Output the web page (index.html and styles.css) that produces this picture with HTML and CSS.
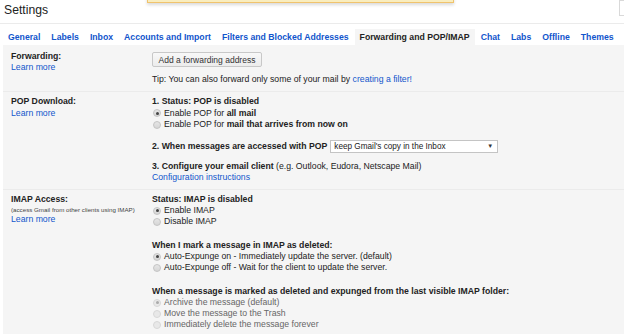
FILE: index.html
```html
<!DOCTYPE html>
<html>
<head>
    <meta charset="UTF-8">
    <title>Settings</title>
    <link rel="stylesheet" href="styles.css">
</head>
<body>
<div class="notice"></div>
<div class="header">
    <h1>Settings</h1>
    <div class="search-edge"></div>
</div>
<div class="tabs">
    <a class="tab">General</a>
    <a class="tab">Labels</a>
    <a class="tab">Inbox</a>
    <a class="tab">Accounts and Import</a>
    <a class="tab">Filters and Blocked Addresses</a>
    <a class="tab active">Forwarding and POP/IMAP</a>
    <a class="tab">Chat</a>
    <a class="tab">Labs</a>
    <a class="tab">Offline</a>
    <a class="tab">Themes</a>
</div>
<div class="content">
    <div class="row first">
        <div class="label">
            <b>Forwarding:</b>
            <a>Learn more</a>
        </div>
        <div class="value">
            <button class="btn">Add a forwarding address</button>
            <div class="tip">Tip: You can also forward only some of your mail by <a>creating a filter!</a></div>
        </div>
    </div>

    <div class="row pop">
        <div class="label">
            <b>POP Download:</b>
            <a>Learn more</a>
        </div>
        <div class="value">
            <div class="section">
                <b>1. Status: POP is disabled</b>
                <div class="opt"><span class="radio checked"></span>Enable POP for&nbsp;<b>all mail</b></div>
                <div class="opt"><span class="radio"></span>Enable POP for&nbsp;<b>mail that arrives from now on</b></div>
            </div>
            <div class="section s2">
                <div class="select-line">
                    <b>2. When messages are accessed with POP</b>
                    <div class="select"><span>keep Gmail's copy in the Inbox</span><span class="caret">▼</span></div>
                </div>
            </div>
            <div class="section s3">
                <div><b>3. Configure your email client</b> (e.g. Outlook, Eudora, Netscape Mail)</div>
                <a>Configuration instructions</a>
            </div>
        </div>
    </div>

    <div class="row imap">
        <div class="label">
            <b>IMAP Access:</b>
            <span class="small">(access Gmail from other clients using IMAP)</span>
            <a>Learn more</a>
        </div>
        <div class="value">
            <div class="section">
                <b>Status: IMAP is disabled</b>
                <div class="opt"><span class="radio checked"></span>Enable IMAP</div>
                <div class="opt"><span class="radio"></span>Disable IMAP</div>
            </div>
            <div class="section s-gap">
                <b>When I mark a message in IMAP as deleted:</b>
                <div class="opt"><span class="radio checked"></span>Auto-Expunge on - Immediately update the server. (default)</div>
                <div class="opt"><span class="radio"></span>Auto-Expunge off - Wait for the client to update the server.</div>
            </div>
            <div class="section s-gap">
                <b>When a message is marked as deleted and expunged from the last visible IMAP folder:</b>
                <div class="opt disabled"><span class="radio checked"></span>Archive the message (default)</div>
                <div class="opt disabled"><span class="radio"></span>Move the message to the Trash</div>
                <div class="opt disabled"><span class="radio"></span>Immediately delete the message forever</div>
            </div>
        </div>
    </div>
</div>
</body>
</html>
```

FILE: styles.css
```css
* {
    box-sizing: border-box;
    margin: 0;
    padding: 0;
}

body {
    font-family: "Liberation Sans", Arial, sans-serif;
    font-size: 8.7px;
    line-height: 11.3px;
    color: #222;
    background-color: #fff;
    overflow: hidden;
}

a {
    color: #15c;
    cursor: pointer;
}

/* yellow message bar, mostly scrolled off the top */
.notice {
    position: absolute;
    left: 147px;
    top: -20px;
    width: 307px;
    height: 23px;
    background-color: #f9edbe;
    border: 1px solid #f0c36d;
    box-shadow: 0 2px 3px rgba(0, 0, 0, 0.15);
}

.header {
    display: flex;
    height: 24px;
    border-bottom: 1px solid #ebebeb;
}

h1 {
    font-weight: normal;
    font-size: 12.2px;
    line-height: 14px;
    padding: 3px 0 0 4px;
    color: #222;
}

.search-edge {
    margin-left: auto;
    width: 5px;
    height: 16px;
    border: 1px solid #d9d9d9;
    border-right: none;
    background-color: #fff;
}

.tabs {
    display: flex;
    padding: 5px 0 0 3px;
}

.tab {
    font-weight: bold;
    line-height: 16px;
    padding: 0 5px;
    margin-right: 1px;
}

.tab.active {
    color: #222;
    background-color: #f5f5f5;
}

.content {
    margin-left: 3px;
    background-color: #f5f5f5;
    min-height: 300px;
}

.row {
    display: flex;
    padding: 4px 0 6px 8px;
    border-top: 1px solid #ebebeb;
}

.row.first {
    border-top: none;
    padding-top: 6px;
}

.row.pop {
    padding-bottom: 5px;
}

.label {
    width: 141px;
    flex-shrink: 0;
}

.label b,
.label a,
.label .small {
    display: block;
}

.label .small {
    font-size: 6.2px;
    line-height: 9px;
    color: #444;
}

.value {
    flex: 1;
}

.btn {
    display: block;
    margin-top: 1px;
    width: 110px;
    height: 15px;
    font-family: inherit;
    font-size: 8.5px;
    color: #333;
    background: linear-gradient(#f8f8f8, #ececec);
    border: 1px solid #c8c8c8;
    border-radius: 2px;
}

.tip {
    margin-top: 7px;
}

.opt {
    display: flex;
    align-items: center;
}

.radio {
    width: 8px;
    height: 8px;
    margin: 0 3px 0 1px;
    border-radius: 50%;
    border: 1px solid #c4c4c4;
    background: linear-gradient(#e6e6e6, #d6d6d6);
    display: flex;
    align-items: center;
    justify-content: center;
}

.radio.checked::after {
    content: "";
    width: 3px;
    height: 3px;
    border-radius: 50%;
    background-color: #444;
}

.opt.disabled {
    color: #666;
}

.opt.disabled .radio {
    border-color: #d8d8d8;
    background: #e8e8e8;
}

.opt.disabled .radio.checked::after {
    background-color: #aaa;
}

.s2 {
    margin-top: 10px;
}

.s3 {
    margin-top: 8px;
}

.s-gap {
    margin-top: 12px;
}

.select-line {
    display: flex;
    align-items: center;
    height: 13px;
}

.select {
    display: flex;
    justify-content: space-between;
    align-items: center;
    width: 168px;
    height: 13px;
    margin-left: 3px;
    padding: 0 4px 0 3px;
    background-color: #fff;
    border: 1px solid #c4c4c4;
    font-size: 8.2px;
    color: #222;
}

.caret {
    font-size: 6px;
    color: #333;
}
```
